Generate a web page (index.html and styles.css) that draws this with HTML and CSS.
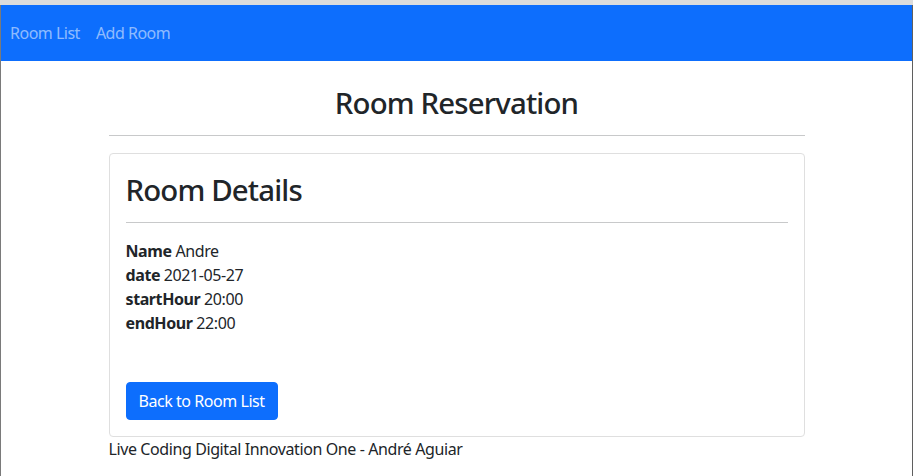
FILE: index.html
```html
<!DOCTYPE html>
<html lang="en">
<head>
<meta charset="utf-8">
<title>Room Reservation</title>
<link rel="stylesheet" href="styles.css">
</head>
<body>
<div class="chrome"></div>
<div class="window">
  <nav class="navbar">
    <ul class="nav">
      <li><a class="nav-link" href="#">Room List</a></li>
      <li><a class="nav-link" href="#">Add Room</a></li>
    </ul>
  </nav>
  <main class="container">
    <h2 class="title">Room Reservation</h2>
    <hr class="rule rule-title">
    <section class="card">
      <h2 class="card-title">Room Details</h2>
      <hr class="rule">
      <div class="fields">
        <div><b>Name</b> Andre</div>
        <div><b>date</b> 2021-05-27</div>
        <div><b>startHour</b> 20:00</div>
        <div><b>endHour</b> 22:00</div>
      </div>
      <div class="actions">
        <button class="btn" type="button">Back to Room List</button>
      </div>
    </section>
    <footer class="footer">Live Coding Digital Innovation One - André Aguiar</footer>
  </main>
</div>
</body>
</html>
```
FILE: styles.css
```css
* { box-sizing: border-box; }
html, body { margin: 0; padding: 0; height: 100%; }
body {
  font-family: "Noto Sans", "Open Sans", sans-serif;
  font-size: 16px;
  line-height: 1.5;
  letter-spacing: -0.4px;
  color: #212529;
  background: #fff;
  display: flex;
  flex-direction: column;
  overflow: hidden;
}
.chrome { height: 5px; background: #dcdcdc; flex: none; }
.window {
  flex: 1;
  border-left: 1px solid #7a7a7a;
  border-right: 1px solid #5f5f5f;
}
.navbar {
  background: #0d6efd;
  height: 56px;
  display: flex;
  align-items: center;
  padding-left: 1px;
}
.nav { list-style: none; margin: 0; padding: 0; display: flex; }
.nav-link {
  display: block;
  padding: 8px;
  color: rgba(255, 255, 255, 0.55);
  text-decoration: none;
  font-size: 16px;
  letter-spacing: -0.5px;
}
.container {
  width: 696px;
  margin: 0 auto;
  padding-top: 23px;
}
h2 {
  font-size: 29.4px;
  font-weight: 500;
  line-height: 31px;
  padding-top: 4px;
  letter-spacing: -0.85px;
  margin: 0 0 8px;
}
.title { text-align: center; }
.card-title { padding-top: 5px; }
.rule {
  border: 0;
  border-top: 1px solid #c8c9ca;
  margin: 16px 0;
  height: 0;
}
.rule-title { margin-bottom: 17px; }
.card {
  border: 1px solid #dfdfdf;
  border-radius: 4px;
  padding: 16px;
}
.actions { margin-top: 47px; }
.btn {
  font: inherit;
  letter-spacing: -0.45px;
  color: #fff;
  background: #0d6efd;
  border: 1px solid #0d6efd;
  border-radius: 4px;
  padding: 6px 12px;
  line-height: 1.5;
}
b { font-weight: 700; }
.footer { line-height: 24px; }
```
